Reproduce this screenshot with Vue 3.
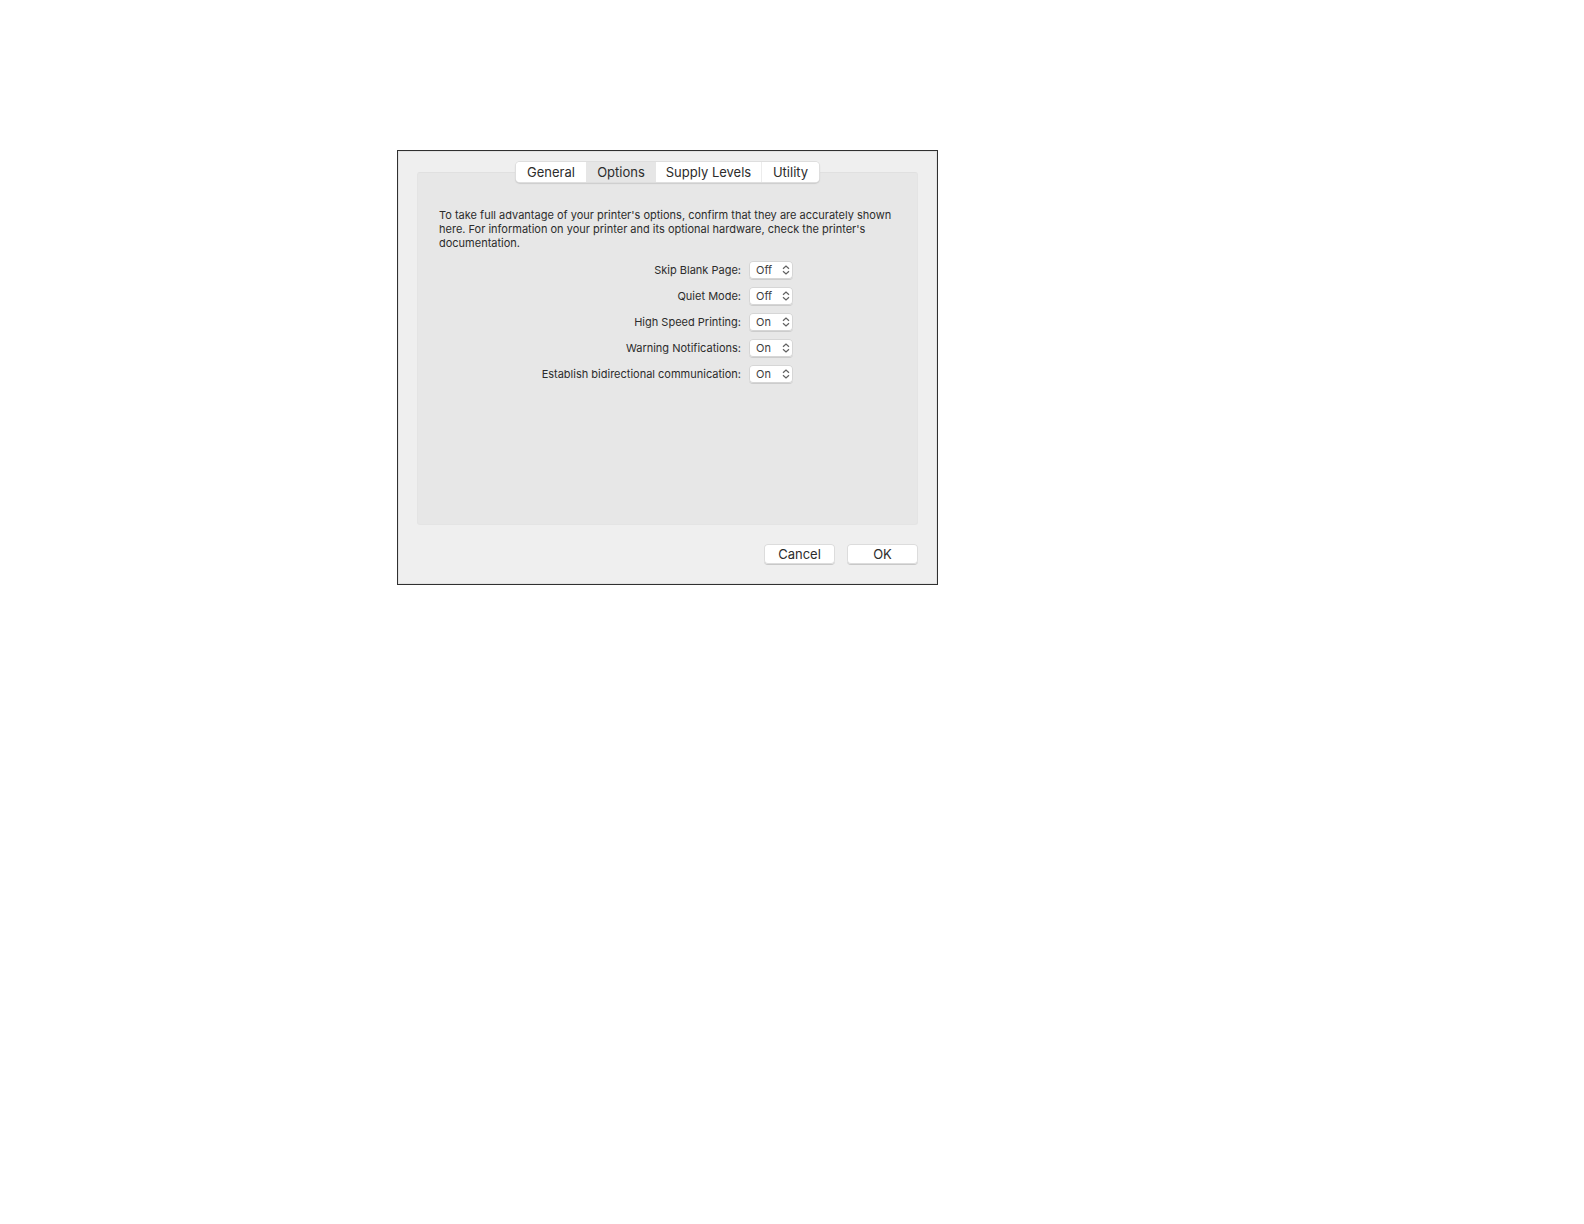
<script setup>
import { ref } from 'vue'

const tabs = ['General', 'Options', 'Supply Levels', 'Utility']
const activeTab = ref('Options')

const settings = ref([
  { id: 'skip-blank-page', label: 'Skip Blank Page:', value: 'Off' },
  { id: 'quiet-mode', label: 'Quiet Mode:', value: 'Off' },
  { id: 'high-speed', label: 'High Speed Printing:', value: 'On' },
  { id: 'warnings', label: 'Warning Notifications:', value: 'On' },
  { id: 'bidirectional', label: 'Establish bidirectional communication:', value: 'On' },
])
</script>

<template>
  <main class="page">
    <form class="dialog" @submit.prevent>
      <div class="tabs" role="tablist">
        <button
          v-for="tab in tabs"
          :key="tab"
          type="button"
          role="tab"
          class="tab"
          :class="{ active: tab === activeTab }"
          :aria-selected="tab === activeTab"
          @click="activeTab = tab"
        >{{ tab }}</button>
      </div>

      <section class="panel">
        <p class="intro">
          To take full advantage of your printer's options, confirm that they are accurately shown
          here. For information on your printer and its optional hardware, check the printer's
          documentation.
        </p>
        <div v-for="item in settings" :key="item.id" class="row">
          <label :for="item.id">{{ item.label }}</label>
          <span class="popup">
            <select :id="item.id" v-model="item.value">
              <option>Off</option>
              <option>On</option>
            </select>
            <svg class="arrows" viewBox="0 0 8 10" aria-hidden="true">
              <path d="M1 3.8 4 1 7 3.8M1 6.2 4 9 7 6.2" />
            </svg>
          </span>
        </div>
      </section>

      <footer class="actions">
        <button type="button" class="push">Cancel</button>
        <button type="submit" class="push">OK</button>
      </footer>
    </form>
  </main>
</template>

<style>
body {
  background: #fff;
}
</style>

<style scoped>
.page {
  padding: 150px 24px 24px calc(25% + 1px);
  font-family: Inter, "Liberation Sans", sans-serif;
  color: #2c2c2c;
}

.dialog {
  box-sizing: border-box;
  width: 100%;
  max-width: 541px;
  padding: 11px 19px 20px;
  border: 1px solid #303030;
  background: #efefef;
  box-shadow: inset 0 0 0 1px #e2e2e2;
}

.tabs {
  position: relative;
  display: grid;
  grid-template-columns: 70px 70px 105px 58px;
  width: fit-content;
  height: 20px;
  margin: 0 auto -10px;
  border-radius: 4px;
  background: #fff;
  box-shadow: 0 0 0 1px #dedede, 0 1px 1px 1px #cccccc;
}

.tab {
  padding: 0;
  border: 0;
  background: #fff;
  color: inherit;
  font: 13px/20px Inter, "Liberation Sans", sans-serif;
}

.tab:first-child {
  border-radius: 4px 0 0 4px;
}

.tab:last-child {
  border-left: 1px solid #ececec;
  border-radius: 0 4px 4px 0;
}

.tab.active {
  background: #e6e6e6;
}

.panel {
  box-sizing: border-box;
  min-height: 353px;
  padding: 35px 21px 22px;
  border: 1px solid #e4e4e4;
  border-top-color: #e0e0e0;
  border-radius: 3px;
  background: #e7e7e7;
}

.intro {
  margin: 0 0 11px;
  font-size: 11px;
  line-height: 14px;
}

.row {
  display: grid;
  grid-template-columns: 302px 44px;
  column-gap: 8px;
  align-items: center;
  height: 18px;
  margin-bottom: 8px;
  font-size: 11px;
  line-height: 14px;
}

.row label {
  text-align: right;
}

.popup {
  position: relative;
  display: block;
  height: 18px;
}

.popup select {
  display: block;
  width: 100%;
  height: 18px;
  padding: 0 7px;
  border: 0;
  border-radius: 4px;
  appearance: none;
  background: #fff;
  color: #404040;
  font: 11px/18px Inter, "Liberation Sans", sans-serif;
  box-shadow: inset 0 0 0 1px #d6d6d6, 0 1px 0 #cccccc;
}

.arrows {
  position: absolute;
  top: 4px;
  right: 3px;
  width: 8px;
  height: 10px;
  fill: none;
  stroke: #606060;
  stroke-width: 1.2;
  pointer-events: none;
}

.actions {
  display: flex;
  justify-content: flex-end;
  gap: 12px;
  margin-top: 19px;
}

.push {
  width: 71px;
  height: 20px;
  padding: 0;
  border: 0;
  border-radius: 4px;
  background: #fff;
  color: inherit;
  font: 13px/20px Inter, "Liberation Sans", sans-serif;
  box-shadow: inset 0 0 0 1px #dcdcdc, 0 1px 0 #c8c8c8;
}
</style>
